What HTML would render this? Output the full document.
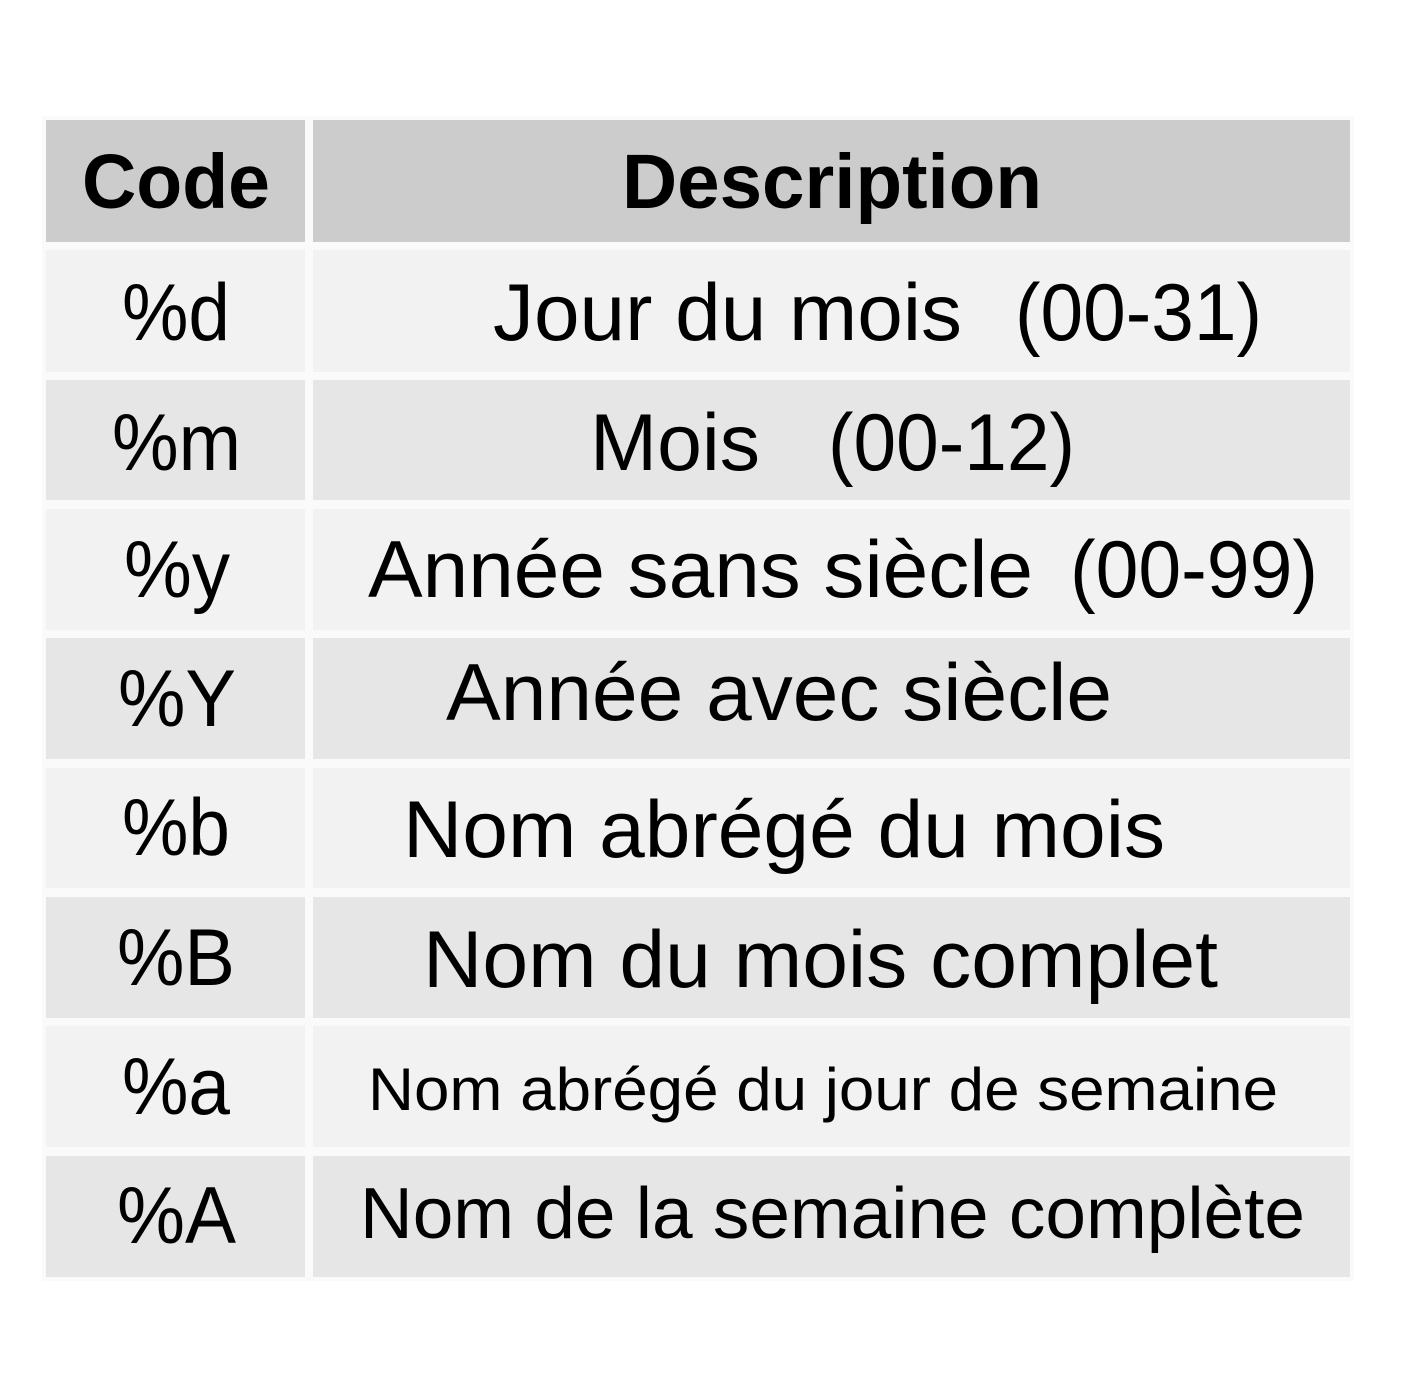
<!DOCTYPE html>
<html><head><meta charset="utf-8"><style>
html,body{margin:0;padding:0;background:#fff;}
svg{display:block;}
text{font-family:"Liberation Sans",Arial,sans-serif;fill:#000;}
</style></head><body>
<svg width="1406" height="1398" viewBox="0 0 1406 1398" xmlns="http://www.w3.org/2000/svg">
<rect x="0" y="0" width="1406" height="1398" fill="#fff"/>
<rect x="42" y="116" width="1312" height="1165" fill="#fafafa"/>
<g>
<rect x="46" y="120" width="259" height="122" fill="#cccccc"/><rect x="313" y="120" width="1037" height="122" fill="#cccccc"/>
<rect x="46" y="250" width="259" height="122" fill="#f2f2f2"/><rect x="313" y="250" width="1037" height="122" fill="#f2f2f2"/>
<rect x="46" y="380" width="259" height="120" fill="#e6e6e6"/><rect x="313" y="380" width="1037" height="120" fill="#e6e6e6"/>
<rect x="46" y="509" width="259" height="121" fill="#f2f2f2"/><rect x="313" y="509" width="1037" height="121" fill="#f2f2f2"/>
<rect x="46" y="638" width="259" height="121" fill="#e6e6e6"/><rect x="313" y="638" width="1037" height="121" fill="#e6e6e6"/>
<rect x="46" y="768" width="259" height="120" fill="#f2f2f2"/><rect x="313" y="768" width="1037" height="120" fill="#f2f2f2"/>
<rect x="46" y="897" width="259" height="121" fill="#e6e6e6"/><rect x="313" y="897" width="1037" height="121" fill="#e6e6e6"/>
<rect x="46" y="1026" width="259" height="121" fill="#f2f2f2"/><rect x="313" y="1026" width="1037" height="121" fill="#f2f2f2"/>
<rect x="46" y="1156" width="259" height="121" fill="#e6e6e6"/><rect x="313" y="1156" width="1037" height="121" fill="#e6e6e6"/>
</g>
<text x="82" y="208" font-size="77" font-weight="bold" textLength="188" lengthAdjust="spacingAndGlyphs">Code</text>
<text x="622" y="208" font-size="77" font-weight="bold" textLength="420" lengthAdjust="spacingAndGlyphs">Description</text>

<text x="122" y="340" font-size="81" textLength="108" lengthAdjust="spacingAndGlyphs">%d</text>
<text x="493" y="340" font-size="81" textLength="469" lengthAdjust="spacingAndGlyphs">Jour du mois</text>
<text x="1015" y="340" font-size="81" textLength="247" lengthAdjust="spacingAndGlyphs">(00-31)</text>

<text x="112" y="470" font-size="81" textLength="129" lengthAdjust="spacingAndGlyphs">%m</text>
<text x="590" y="470" font-size="81" textLength="170" lengthAdjust="spacingAndGlyphs">Mois</text>
<text x="828" y="470" font-size="81" textLength="247" lengthAdjust="spacingAndGlyphs">(00-12)</text>

<text x="124" y="597" font-size="81" textLength="106" lengthAdjust="spacingAndGlyphs">%y</text>
<text x="368" y="597" font-size="81" textLength="665" lengthAdjust="spacingAndGlyphs">Année sans siècle</text>
<text x="1070" y="597" font-size="81" textLength="248" lengthAdjust="spacingAndGlyphs">(00-99)</text>

<text x="118" y="726" font-size="81" textLength="118" lengthAdjust="spacingAndGlyphs">%Y</text>
<text x="446" y="720" font-size="81" textLength="666" lengthAdjust="spacingAndGlyphs">Année avec siècle</text>

<text x="122" y="855" font-size="81" textLength="108" lengthAdjust="spacingAndGlyphs">%b</text>
<text x="403" y="857" font-size="81" textLength="762" lengthAdjust="spacingAndGlyphs">Nom abrégé du mois</text>

<text x="117" y="985" font-size="81" textLength="118" lengthAdjust="spacingAndGlyphs">%B</text>
<text x="423" y="987" font-size="81" textLength="795" lengthAdjust="spacingAndGlyphs">Nom du mois complet</text>

<text x="122" y="1114" font-size="81" textLength="108" lengthAdjust="spacingAndGlyphs">%a</text>
<text x="368" y="1110" font-size="60" textLength="910" lengthAdjust="spacingAndGlyphs">Nom abrégé du jour de semaine</text>

<text x="117" y="1243" font-size="81" textLength="119" lengthAdjust="spacingAndGlyphs">%A</text>
<text x="360" y="1238" font-size="72" textLength="945" lengthAdjust="spacingAndGlyphs">Nom de la semaine complète</text>
</svg>
</body></html>
